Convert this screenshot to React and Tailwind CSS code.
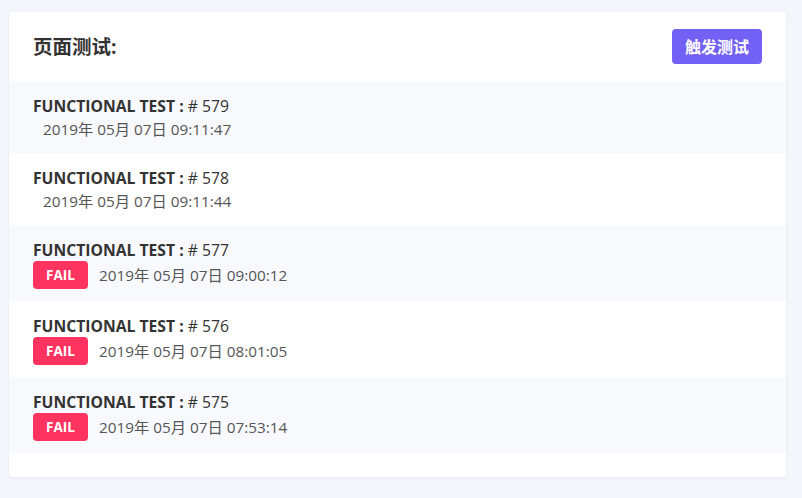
import React from 'react';

const tests = [
  { id: 579, time: '2019年 05月 07日 09:11:47', fail: false },
  { id: 578, time: '2019年 05月 07日 09:11:44', fail: false },
  { id: 577, time: '2019年 05月 07日 09:00:12', fail: true },
  { id: 576, time: '2019年 05月 07日 08:01:05', fail: true },
  { id: 575, time: '2019年 05月 07日 07:53:14', fail: true },
];

const App = () => {
  return (
    <div
      className="min-h-[498px] bg-[#f3f6fb] pt-[12px] pl-[9px] pr-[16px] pb-[20px]"
      style={{ fontFamily: '"Open Sans", "Noto Sans CJK SC", sans-serif' }}
    >
      <div className="bg-white rounded-[4px] shadow-[0_1px_4px_rgba(30,50,90,0.06)] pb-[24px]">
        {/* Header */}
        <div className="flex items-center justify-between h-[69px] pl-[24px] pr-[24px]">
          <h2 className="text-[19.5px] font-bold text-[#333]">页面测试:</h2>
          <button className="h-[35px] px-[13px] bg-[#7360f4] text-white text-[16px] font-bold rounded-[4px]">
            触发测试
          </button>
        </div>

        {/* Test list */}
        <div>
          {tests.map((t, i) => (
            <div
              key={t.id}
              className={`pl-[24px] pt-[14px] pb-[12px] ${i % 2 === 0 ? 'bg-[#f8f9fd]' : 'bg-white'}`}
            >
              <div className="h-[22px] leading-[22px] text-[15.7px] text-[#333]">
                <span className="font-bold">FUNCTIONAL TEST : </span># {t.id}
              </div>
              {t.fail ? (
                <div className="flex items-center h-[28px]">
                  <span className="w-[55px] h-[28px] flex items-center justify-center bg-[#ff335f] text-white text-[13.5px] font-bold rounded-[4px]">
                    FAIL
                  </span>
                  <span className="ml-[11px] text-[15.3px] text-[#555]">{t.time}</span>
                </div>
              ) : (
                <div className="h-[24px] leading-[24px] pl-[10px] text-[15.3px] text-[#555]">
                  {t.time}
                </div>
              )}
            </div>
          ))}
        </div>
      </div>
    </div>
  );
};

export default App;
